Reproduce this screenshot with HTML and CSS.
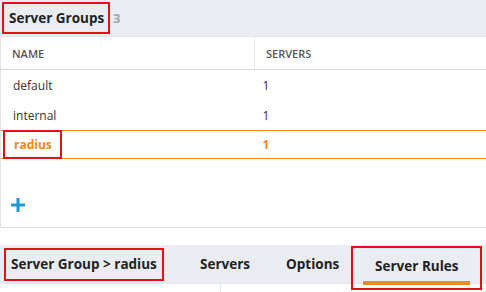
FILE: index.html
```html
<!DOCTYPE html>
<html lang="en">
<head>
    <meta charset="UTF-8">
    <title>Server Groups</title>
    <link rel="stylesheet" href="styles.css">
</head>
<body>
    <div class="panel">
        <div class="panel-head">
            <h2 class="marked">Server Groups</h2>
            <span class="count">3</span>
        </div>
        <table class="grid">
            <thead>
                <tr>
                    <th class="col-name">NAME</th>
                    <th>SERVERS</th>
                </tr>
            </thead>
            <tbody>
                <tr>
                    <td>default</td>
                    <td>1</td>
                </tr>
                <tr>
                    <td>internal</td>
                    <td>1</td>
                </tr>
                <tr class="selected">
                    <td><span class="marked">radius</span></td>
                    <td>1</td>
                </tr>
            </tbody>
        </table>
        <div class="add-row">
            <svg class="add" width="16" height="16" viewBox="0 0 16 16">
                <path d="M8 1v14M1 8h14" stroke="#1a9ad6" stroke-width="3"/>
            </svg>
        </div>
    </div>

    <div class="tabbar">
        <div class="crumb marked">Server Group &gt; radius</div>
        <div class="tab">Servers</div>
        <div class="tab">Options</div>
        <div class="tab active marked"><span>Server Rules</span></div>
    </div>
    <div class="tab-body">
        <div class="split"></div>
    </div>
</body>
</html>
```

FILE: styles.css
```css
body {
    margin: 0;
    font-family: "Open Sans", "DejaVu Sans", sans-serif;
    background: #fff;
    color: #333;
    width: 486px;
    height: 292px;
    overflow: hidden;
}
.marked {
    border: 2px solid #e3101a;
    box-sizing: border-box;
}
.panel {
    border-left: 1px solid #dfe2e6;
    border-bottom: 1px solid #dfe2e6;
}
.panel-head {
    height: 37px;
    background: #e9ecf0;
    display: flex;
    align-items: center;
    padding-left: 2px;
    border-bottom: 1px solid #e1e4e8;
    box-sizing: border-box;
    margin-left: -1px;
}
.panel-head h2 {
    margin: 0;
    font-size: 13.5px;
    font-weight: 700;
    color: #222;
    white-space: nowrap;
    height: 32px;
    line-height: 28px;
    padding: 0 5px;
    width: 108px;
}
.count {
    font-size: 13px;
    font-weight: 700;
    color: #a3a6aa;
    margin-left: 3px;
}
.grid {
    width: 100%;
    border-collapse: collapse;
    font-size: 12px;
}
.grid th {
    text-align: left;
    font-size: 11px;
    font-weight: 600;
    color: #555;
    height: 32px;
    padding: 0 0 0 11px;
    border-bottom: 1px solid #d9dcdf;
}
.grid th.col-name {
    width: 242px;
    border-right: 1px solid #e4e6e9;
}
.grid td {
    height: 31px;
    padding: 0 0 0 12px;
    color: #333;
}
.grid td + td {
    padding-left: 8px;
}
.grid tbody tr:nth-child(2) td {
    height: 29px;
}
.grid tr.selected td {
    border-top: 1px solid #ef8a1a;
    border-bottom: 1px solid #ef8a1a;
    color: #f08a12;
    font-weight: 700;
    height: 27px;
}
.grid tr.selected td:first-child {
    padding-left: 2px;
}
.grid tr.selected .marked {
    display: inline-block;
    width: 59px;
    height: 29px;
    line-height: 25px;
    padding-left: 9px;
    margin: -1px 0;
}
.add-row {
    height: 68px;
    display: flex;
    align-items: flex-end;
    padding-left: 9px;
    padding-bottom: 14px;
    box-sizing: border-box;
}
.add {
    display: block;
}
.tabbar {
    margin-top: 17px;
    height: 38px;
    background: #e9ecf0;
    display: flex;
    align-items: center;
    font-size: 13.5px;
    font-weight: 700;
    color: #222;
}
.crumb {
    margin-left: 4px;
    width: 160px;
    height: 33px;
    line-height: 29px;
    padding-left: 5px;
}
.tab {
    margin-left: 36px;
}
.tab + .tab {
    margin-left: 36px;
}
.tab.active {
    margin-left: 12px;
    width: 131px;
    height: 44px;
    align-self: flex-start;
    margin-top: 1px;
    display: flex;
    justify-content: center;
    padding-top: 6px;
    box-sizing: border-box;
}
.tab.active span {
    border-bottom: 4px solid #ef8a1a;
    height: 27px;
    padding: 0 12px;
    line-height: 24px;
}
.tab-body {
    height: 20px;
    border-top: 1px solid #e4e6e9;
}
.split {
    margin-left: 220px;
    width: 1px;
    height: 20px;
    background: #e4e6e9;
}
```
